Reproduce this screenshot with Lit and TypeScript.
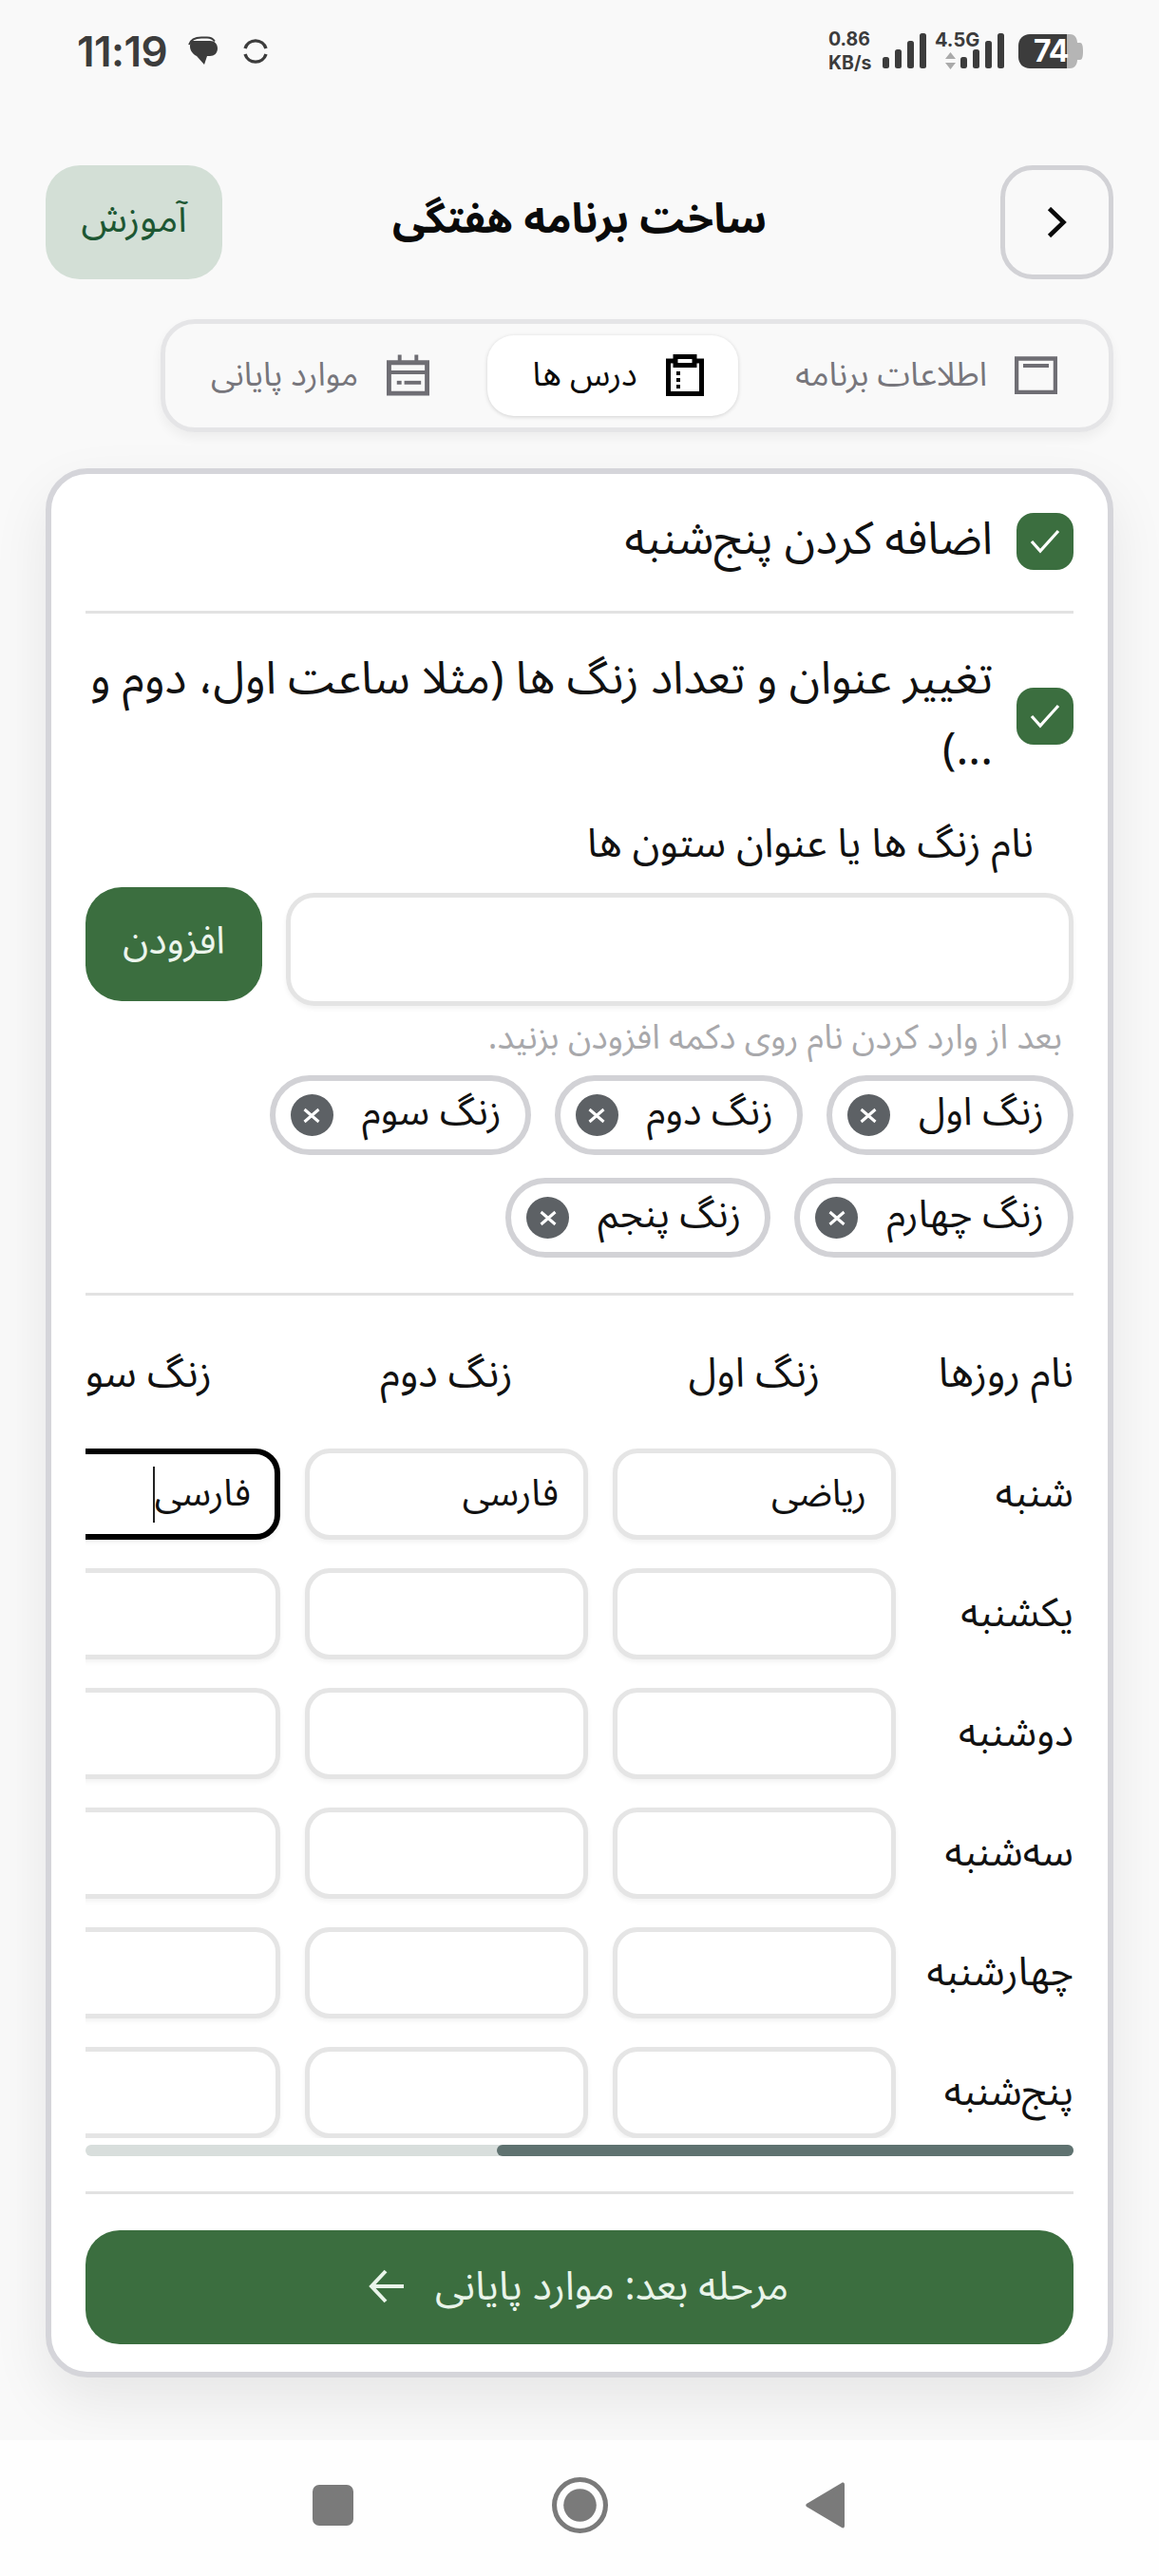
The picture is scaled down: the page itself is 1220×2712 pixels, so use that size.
import { LitElement, html, css } from "lit";
import { customElement } from "lit/decorators.js";

const DAYS = ["شنبه", "یکشنبه", "دوشنبه", "سه‌شنبه", "چهارشنبه", "پنج‌شنبه"];
const BELLS = ["زنگ اول", "زنگ دوم", "زنگ سوم", "زنگ چهارم", "زنگ پنجم"];

const check = html`<span class="check"><svg width="34" height="28" viewBox="0 0 34 28"><path d="M3 14 L12 24 L31 3" fill="none" stroke="#fff" stroke-width="3.2"/></svg></span>`;

@customElement("app-root")
export class AppRoot extends LitElement {
  static styles = css`
    :host { display: block; font-family: "Noto Sans Arabic", "Noto Sans", "DejaVu Sans", sans-serif; color: #111; }
    * { box-sizing: border-box; }
    .page { width: 1220px; height: 2712px; background: #f9f9f9; display: flex; flex-direction: column; overflow: hidden; }
    .status { height: 108px; padding: 0 80px 0 81px; display: flex; align-items: center; justify-content: space-between; direction: ltr; color: #3c3c3c; }
    .st-left, .st-right { display: flex; align-items: center; }
    .time { font: 600 44px Inter, sans-serif; letter-spacing: -.6px; width: 117px; }
    .speed { font: 700 19.5px/25px Inter, sans-serif; width: 57px; }
    .net { font: 700 20px Inter, sans-serif; position: absolute; left: 0; top: -5px; }
    .g-wrap { width: 30px; height: 38px; margin-left: 8px; position: relative; }
    .g-arrows { position: absolute; left: 11px; top: 20px; }
    .sig2 { margin-left: -3px; }
    .bat { margin-left: 15px; position: relative; width: 68px; height: 36px; }
    .bat svg { position: absolute; inset: 0; }
    .bat span { position: absolute; left: 16px; top: -2px; font: 700 32px Inter, sans-serif; letter-spacing: -1px; color: #fff; }
    .sync { margin-left: 25px; }
    .head { margin-top: 66px; height: 120px; padding: 0 48px; display: flex; align-items: center; }
    .side { flex: 1 1 0; display: flex; }
    .side.end { justify-content: flex-end; }
    .back { width: 119px; height: 120px; border: 5px solid #d2d2d6; border-radius: 34px; display: flex; align-items: center; justify-content: center; }
    .title { font-size: 44px; font-weight: 700; color: #0a0a0a; margin-top: -6px; }
    .learn { width: 186px; height: 120px; background: #d3dfd6; border-radius: 36px; color: #1d5733; font-size: 40px; display: flex; align-items: center; justify-content: center; padding-bottom: 6px; }
    .tabs { margin: 42px 48px 0 169px; height: 119px; border: 5px solid #e5e5e7; border-radius: 36px; display: flex; align-items: center; padding: 0 54px 0 48px; justify-content: space-between; box-shadow: 0 6px 12px rgba(0,0,0,.05); }
    .tab { display: flex; align-items: center; gap: 29px; font-size: 35px; color: #77767c; padding-bottom: 2px; }
    .tab.last { font-size: 34.5px; gap: 30px; }
    .tab.on { width: 264px; height: 85px; background: #fff; color: #0a0a0a; border-radius: 28px; justify-content: center; gap: 30px; padding-left: 12px; box-shadow: 0 1px 4px rgba(0,0,0,.16); }
    .card { margin: 38px 48px 0; height: 2010px; background: #fff; border: 6px solid #d5d5da; border-radius: 44px; padding: 41px 36px 0; box-shadow: 0 24px 60px rgba(0,0,0,.08); }
    .opt { display: flex; align-items: center; gap: 25px; font-size: 48px; line-height: 75px; }
    .tx { margin-bottom: 5px; }
    .check { flex: none; width: 60px; height: 60px; border-radius: 18px; background: #3b6e3f; display: flex; align-items: center; justify-content: center; }
    hr { margin: 0; border: 0; height: 3px; background: #e2e2e2; }
    .opt.first { height: 60px; }
    .card > hr.d1 { margin-top: 43px; }
    .opt.second { margin-top: 33px; height: 150px; }
    .label { margin: 30px 42px 0 0; font-size: 42.5px; line-height: 60px; }
    .add { margin-top: 15px; display: flex; gap: 25px; height: 125px; }
    .field { flex: 1; margin-top: 6px; height: 119px; border: 5px solid #e4e4e4; border-radius: 30px; box-shadow: 0 3px 5px rgba(0,0,0,.05); }
    .btn { width: 186px; height: 120px; border-radius: 38px; background: #3b6e3f; color: #ecf5ed; font-size: 40px; display: flex; align-items: center; justify-content: center; padding-bottom: 6px; }
    .hint { margin: 9px 12px 0 0; font-size: 36px; line-height: 50px; color: #a8a8ab; }
    .chips { margin-top: 14px; display: flex; flex-wrap: wrap; gap: 24px 25px; width: 880px; }
    .chip { height: 84px; border: 6px solid #d2d2d6; border-radius: 42px; padding: 0 25px 0 16px; display: flex; align-items: center; gap: 30px; font-size: 41px; }
    .chip-tx { margin-bottom: 6px; }
    .x { width: 45px; height: 44px; border-radius: 50%; background: #5d6165; display: flex; align-items: center; justify-content: center; flex: none; }
    .card > hr.d2 { margin-top: 37px; }
    .scroll { margin-top: 41px; overflow: hidden; }
    .grid { display: grid; grid-template-columns: 161px repeat(5, 298px); grid-auto-rows: 96px; grid-template-rows: 90px; column-gap: 26px; row-gap: 30px; width: max-content; align-items: center; font-size: 42px; line-height: 60px; }
    .hd { text-align: center; font-size: 43px; padding-bottom: 6px; }
    .hd.first { text-align: right; }
    .day { text-align: right; }
    .cell { height: 96px; border: 5px solid #e5e5e5; border-radius: 26px; padding: 0 26px; display: flex; align-items: center; font-size: 39px; box-shadow: 0 3px 5px rgba(0,0,0,.05); background: #fff; }
    .cell.focus { border-color: #000; border-width: 6px; padding: 0 25px; }
    .caret { display: inline-block; width: 2px; height: 59px; background: #222; }
    .bar { margin-top: 7px; height: 12px; border-radius: 6px; background: #d8dedc; display: flex; }
    .thumb { height: 12px; border-radius: 6px; background: #5f7270; }
    .card > hr.d3 { margin-top: 37px; }
    .next { margin-top: 38px; height: 120px; border-radius: 36px; background: #3b6e3f; color: #e9f4ea; font-size: 42px; display: flex; align-items: center; justify-content: center; gap: 32px; padding-bottom: 2px; padding-right: 2px; }
    .nav { margin-top: auto; height: 143px; background: #fefefe; direction: ltr; display: flex; align-items: center; padding: 0 0 7px 329px; }
    .nav svg { display: block; }
    .nav .mid { margin-left: 209px; }
    .nav .tri { margin-left: 208px; }
  `;

  render() {
    return html`<div class="page" dir="rtl">
      <div class="status">
        <div class="st-left">
          <span class="time">11:19</span>
          <svg width="32" height="32" viewBox="0 0 32 32"><path d="M1 9C3 3 8 1.500 14 1.500h6c4 0 6 1 8 4" fill="none" stroke="#3c3c3c" stroke-width="1.800"/><path d="M4 5h19c5 0 8 3.500 8 8 0 5-3.500 8-8 8h-3l-3 9-8-9C5 19 2 15 2 11c0-3 1-6 2-6z" fill="#3c3c3c"/></svg>
          <svg class="sync" width="28" height="28" viewBox="0 0 28 28"><path d="M3 11A11.500 11.500 0 0 1 25 11M25 17A11.500 11.500 0 0 1 3 17" fill="none" stroke="#3c3c3c" stroke-width="3.400"/></svg>
        </div>
        <div class="st-right">
          <span class="speed">0.86<br />KB/s</span>
          <svg width="47" height="38" viewBox="0 0 47 38" fill="#3c3c3c"><rect x="0" y="25" width="7" height="12" rx="2.500"/><rect x="13" y="17" width="7" height="20" rx="2.500"/><rect x="26" y="8" width="7" height="29" rx="2.500"/><rect x="39" y="0" width="7" height="37" rx="2.500"/></svg>
          <div class="g-wrap">
            <span class="net">4.5G</span>
            <svg class="g-arrows" width="11" height="18" viewBox="0 0 11 18" fill="#aaa"><path d="M5.500 0 11 7H0zM5.500 18 0 11h11z"/></svg>
          </div>
          <svg class="sig2" width="46" height="38" viewBox="0 0 46 38" fill="#3c3c3c"><rect x="0" y="25" width="7" height="12" rx="2.500"/><rect x="13" y="17" width="7" height="20" rx="2.500"/><rect x="26" y="8" width="7" height="29" rx="2.500"/><rect x="39" y="0" width="7" height="37" rx="2.500"/></svg>
          <div class="bat">
            <svg width="68" height="36" viewBox="0 0 68 36"><path d="M40 0h14c6 0 8 5 8 9h3c2 0 3 3 3 9s-1 9-3 9h-3c0 4-2 9-8 9H40z" fill="#b5b5b5"/><path d="M12 0h39v36H12C5 36 0 31 0 24V12C0 5 5 0 12 0z" fill="#3c3c3c"/></svg>
            <span>74</span>
          </div>
        </div>
      </div>

      <div class="head">
        <div class="side"><div class="back"><svg width="21" height="32" viewBox="0 0 21 32"><path d="M2.500 1.500 L17.500 16 L2.500 30.500" fill="none" stroke="#0a0a0a" stroke-width="4.600"/></svg></div></div>
        <div class="title">ساخت برنامه هفتگی</div>
        <div class="side end"><div class="learn">آموزش</div></div>
      </div>

      <div class="tabs">
        <div class="tab"><svg width="45" height="40" viewBox="0 0 45 40"><path d="M2 2.500h41v35.500H2z" fill="none" stroke="#6f6e74" stroke-width="4.500"/><rect x="9" y="8" width="27" height="4" fill="#6f6e74"/></svg><span>اطلاعات برنامه</span></div>
        <div class="tab on"><svg width="40" height="44" viewBox="0 0 40 44"><path d="M2.500 7h35v34.500h-35z" fill="none" stroke="#000" stroke-width="5"/><rect x="10" y="2.500" width="20" height="9" fill="#fff" stroke="#000" stroke-width="5"/><path d="M11 18h4v4h-4zM11 25h4v4h-4zM11 32h4v4h-4z" fill="#000"/></svg><span>درس ها</span></div>
        <div class="tab last"><svg width="45" height="44" viewBox="0 0 46 44" fill="#6f6e74"><path d="M12 0h4v6h14V0h4v6h12v38H0V6h12zM5 11v6h36v-6zM5 21v18h36V21z"/><rect x="11" y="28" width="5" height="4"/><rect x="19" y="28" width="18" height="4"/></svg><span>موارد پایانی</span></div>
      </div>

      <div class="card">
        <div class="opt first">${check}<span class="tx">اضافه کردن پنج‌شنبه</span></div>
        <hr class="d1" />
        <div class="opt second">${check}<span class="tx">تغییر عنوان و تعداد زنگ ها (مثلا ساعت اول، دوم و ...)</span></div>
        <div class="label">نام زنگ ها یا عنوان ستون ها</div>
        <div class="add"><div class="field"></div><div class="btn">افزودن</div></div>
        <div class="hint">بعد از وارد کردن نام روی دکمه افزودن بزنید.</div>
        <div class="chips">
          ${BELLS.map(b => html`<div class="chip"><span class="chip-tx">${b}</span><span class="x"><svg width="20" height="17" viewBox="0 0 20 17"><path d="M2.500 2 L17.500 15 M17.500 2 L2.500 15" stroke="#fff" stroke-width="3"/></svg></span></div>`)}
        </div>
        <hr class="d2" />
        <div class="scroll">
          <div class="grid">
            <div class="hd first">نام روزها</div>
            ${BELLS.map(b => html`<div class="hd">${b}</div>`)}
            ${DAYS.map((d, i) => html`<div class="day">${d}</div>
              ${BELLS.map((_, j) => html`<div class="cell ${i === 0 && j === 2 ? "focus" : ""}">${i === 0 && j === 0 ? "ریاضی" : i === 0 && j < 3 ? "فارسی" : ""}${i === 0 && j === 2 ? html`<span class="caret"></span>` : ""}</div>`)}`)}
          </div>
        </div>
        <div class="bar"><div class="thumb" style="width:607px"></div></div>
        <hr class="d3" />
        <div class="next"><span>مرحله بعد: موارد پایانی</span><svg width="38" height="36" viewBox="0 0 38 36"><path d="M18 2 L3 18 L18 34 M3 18H37" fill="none" stroke="#e9f4ea" stroke-width="4"/></svg></div>
      </div>

      <div class="nav">
        <svg width="43" height="43" viewBox="0 0 43 43"><rect width="43" height="43" rx="7" fill="#7a7a7a"/></svg>
        <svg class="mid" width="59" height="59" viewBox="0 0 58 58"><circle cx="29" cy="29" r="26.500" fill="none" stroke="#7a7a7a" stroke-width="5"/><circle cx="29" cy="29" r="17" fill="#7a7a7a"/></svg>
        <svg class="tri" width="41" height="49" viewBox="0 0 41 49"><path d="M38 1c2-1 3 0 3 2v43c0 2-1 3-3 2L1 26c-1-1-1-2 0-3z" fill="#7a7a7a"/></svg>
      </div>
    </div>`;
  }
}
